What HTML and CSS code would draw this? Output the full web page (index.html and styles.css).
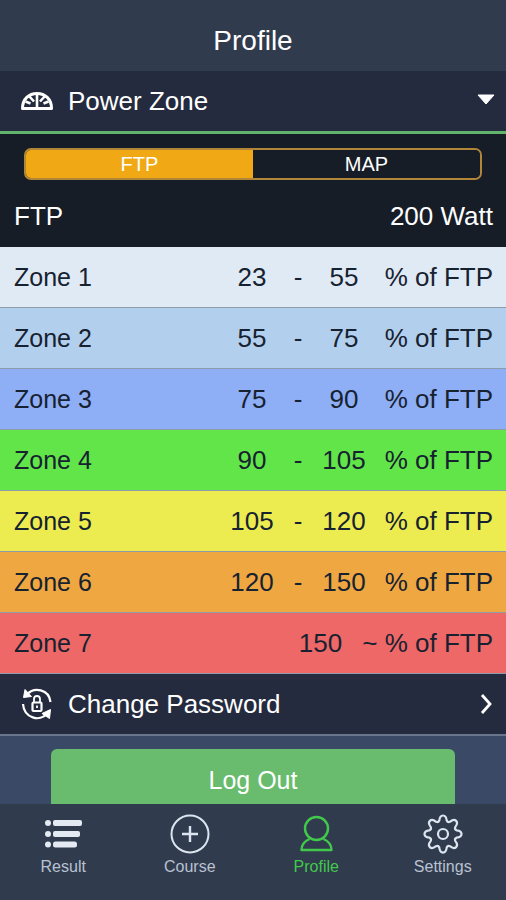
FILE: index.html
```html
<!DOCTYPE html>
<html lang="en">
<head>
<meta charset="utf-8">
<meta name="viewport" content="width=device-width, initial-scale=1">
<title>Profile</title>
<link rel="stylesheet" href="styles.css">
</head>
<body>
<header class="header"><h1>Profile</h1></header>

<main class="content">
  <button type="button" class="row row-open" aria-expanded="true" aria-controls="power-zone">
    <svg class="row-icon" viewBox="0 0 34 34" aria-hidden="true">
      <path d="M2.500 24.500C2.500 15 9 9.500 17 9.500S31.500 15 31.500 24.500Z" fill="none" stroke="#fff" stroke-width="3" stroke-linejoin="round"/>
      <path d="M17 10v14M9 12l5 5.500M25 12l-5 5.500M5.500 17.500l5 2M28.500 17.500l-5 2" fill="none" stroke="#fff" stroke-width="2.600"/>
    </svg>
    <span class="row-label">Power Zone</span>
    <svg class="caret" viewBox="0 0 18 11" aria-hidden="true"><path d="M1 1h16L9 10z" fill="#fff" stroke="#fff" stroke-linejoin="round"/></svg>
  </button>

  <section id="power-zone">
    <div class="panel">
      <div class="segments">
        <button type="button" class="segment segment-active" aria-pressed="true">FTP</button>
        <button type="button" class="segment" aria-pressed="false">MAP</button>
      </div>
      <div class="power"><span>FTP</span><span>200 Watt</span></div>
    </div>

    <table class="zones">
      <colgroup><col><col class="col-num"><col class="col-dash"><col class="col-num"><col class="col-unit"></colgroup>
      <tbody>
        <tr class="zone-1"><th scope="row">Zone 1</th><td>23</td><td>-</td><td>55</td><td class="unit">% of FTP</td></tr>
        <tr class="zone-2"><th scope="row">Zone 2</th><td>55</td><td>-</td><td>75</td><td class="unit">% of FTP</td></tr>
        <tr class="zone-3"><th scope="row">Zone 3</th><td>75</td><td>-</td><td>90</td><td class="unit">% of FTP</td></tr>
        <tr class="zone-4"><th scope="row">Zone 4</th><td>90</td><td>-</td><td>105</td><td class="unit">% of FTP</td></tr>
        <tr class="zone-5"><th scope="row">Zone 5</th><td>105</td><td>-</td><td>120</td><td class="unit">% of FTP</td></tr>
        <tr class="zone-6"><th scope="row">Zone 6</th><td>120</td><td>-</td><td>150</td><td class="unit">% of FTP</td></tr>
        <tr class="zone-7"><th scope="row">Zone 7</th><td class="unit" colspan="4"><span class="minimum">150</span>~ % of FTP</td></tr>
      </tbody>
    </table>
  </section>

  <button type="button" class="row row-password">
    <svg class="row-icon" viewBox="0 0 34 34" fill="none" stroke="#fff" aria-hidden="true">
      <path d="M7 7.500C14 -0.500 29 2 30.500 15M3 17C4 31 20 35.500 27 26.500" stroke-width="2.200"/>
      <path d="M5 2.500L3.500 10.500L11.500 9.500zM29.500 31.500L30.500 22.500L22 26.500z" fill="#fff" stroke-linejoin="round"/>
      <rect x="12.500" y="15.500" width="9" height="8.500" rx="1" stroke-width="2.200"/>
      <path d="M14 15.500v-3.500a3 3 0 0 1 6 0v3.500M17 18.500v2.500" stroke-width="1.800"/>
    </svg>
    <span class="row-label">Change Password</span>
    <svg class="chevron" viewBox="0 0 12 20" aria-hidden="true"><path d="M2 1l8 9-8 9" fill="none" stroke="#fff" stroke-width="2.800"/></svg>
  </button>

  <div class="actions"><button type="button" class="logout">Log Out</button></div>
</main>

<nav class="tabs">
  <a class="tab" href="#result">
    <svg viewBox="0 0 40 40" fill="#e3eaf2" aria-hidden="true">
      <circle cx="5" cy="9" r="3"/><circle cx="5" cy="20" r="3"/><circle cx="5" cy="30.500" r="3"/>
      <rect x="10" y="6" width="29" height="6" rx="2"/><rect x="10" y="17" width="27" height="6" rx="2"/><rect x="10" y="27.500" width="24" height="6" rx="2.500"/>
    </svg>
    Result
  </a>
  <a class="tab" href="#course">
    <svg viewBox="0 0 40 40" fill="none" stroke="#dce5ef" stroke-width="2" aria-hidden="true"><circle cx="20" cy="20" r="18.500"/><path d="M20 12v16M12 20h16" stroke-width="2.400"/></svg>
    Course
  </a>
  <a class="tab tab-active" href="#profile" aria-current="page">
    <svg viewBox="0 0 40 40" fill="none" stroke="#42c94b" stroke-width="2.400" stroke-linejoin="round" aria-hidden="true"><circle cx="20.500" cy="14.500" r="11.500"/><path d="M13.500 25C9 27 5.500 30 5.500 36H35.500C35.500 30 32 27 27.500 25"/></svg>
    Profile
  </a>
  <a class="tab" href="#settings">
    <svg viewBox="0 0 40 40" fill="none" stroke="#dce5ef" stroke-width="2.200" stroke-linejoin="round" aria-hidden="true">
      <circle cx="20" cy="20" r="5"/>
      <path d="M16.300 6.500C17 -0.200 23 -0.200 23.700 6.500Q24.700 8.600 26.900 7.800C32.200 3.600 36.400 7.800 32.200 13.100Q31.400 15.300 33.500 16.300C40.200 17 40.200 23 33.500 23.700Q31.400 24.700 32.200 26.900C36.400 32.200 32.200 36.400 26.900 32.200Q24.700 31.400 23.700 33.500C23 40.200 17 40.200 16.300 33.500Q15.300 31.400 13.100 32.200C7.800 36.400 3.600 32.200 7.800 26.900Q8.600 24.700 6.500 23.700C-0.200 23 -0.200 17 6.500 16.300Q8.600 15.300 7.800 13.100C3.600 7.800 7.800 3.600 13.100 7.800Q15.300 8.600 16.300 6.500Z"/>
    </svg>
    Settings
  </a>
</nav>
</body>
</html>
```
FILE: styles.css
```css
* { box-sizing: border-box; }

body {
  margin: 0;
  height: 100vh;
  display: flex;
  flex-direction: column;
  background: #3a4965;
  color: #fff;
  font-family: "Liberation Sans", Arial, sans-serif;
  font-size: 26px;
  line-height: 30px;
}

button {
  margin: 0;
  border: 0;
  color: inherit;
  font: inherit;
  cursor: pointer;
}

.header {
  padding: 25px 16px 14px;
  background: #303b4e;
  text-align: center;
}

.header h1 {
  margin: 0;
  font-size: 28px;
  font-weight: 400;
  line-height: 32px;
}

.content {
  flex: 1;
  min-height: 0;
  overflow-y: auto;
  scrollbar-width: none;
}

.row {
  display: flex;
  align-items: center;
  width: 100%;
  padding: 15px 12px 15px 20px;
  background: #252b3e;
  text-align: left;
}

.row-open { border-bottom: 3px solid #62b46d; }
.row-password { border-bottom: 2px solid #68758c; }

.row-icon {
  width: 34px;
  height: 34px;
  margin: -2px 14px -2px 0;
}

.row-label { flex: 1; }

.caret {
  width: 18px;
  height: 11px;
  margin: 0 -1px 4px 0;
}

.chevron {
  width: 12px;
  height: 20px;
  margin-right: 2px;
}

.panel {
  padding: 14px 0 16px;
  background: #171d27;
}

.segments {
  display: flex;
  margin: 0 24px;
  border: 2px solid #b28638;
  border-radius: 7px;
  overflow: hidden;
}

.segment {
  flex: 1;
  padding: 2px;
  background: #171d27;
  font-size: 20px;
  line-height: 24px;
}

.segment-active { background: #f0a915; }

.power {
  display: flex;
  justify-content: space-between;
  padding: 21px 13px 0 14px;
}

.zones {
  width: 100%;
  border-spacing: 0;
  table-layout: fixed;
  color: #172230;
}

.col-num { width: 70px; }
.col-dash { width: 22px; }
.col-unit { width: 127px; }

.zones th,
.zones td {
  height: 61px;
  padding: 0;
  border-bottom: 1px solid #8e9bab;
  font-weight: 400;
  text-align: center;
}

.zones th {
  padding-left: 14px;
  font-size: 25px;
  text-align: left;
}

.zones .unit {
  padding-right: 13px;
  text-align: right;
}

.minimum { margin-right: 20px; }

.zone-1 { background: #dfeaf5; }
.zone-2 { background: #b3cfee; }
.zone-3 { background: #8eaef6; }
.zone-4 { background: #62e549; }
.zone-5 { background: #ecec50; }
.zone-6 { background: #efa742; }
.zone-7 { background: #ef6868; }

.actions { padding: 13px 10% 20px; }

.logout {
  width: 100%;
  padding: 16px;
  border-radius: 6px;
  background: #69bb6d;
  font-size: 25px;
}

.tabs {
  display: grid;
  grid-template-columns: repeat(4, 1fr);
  padding: 10px 0 22px;
  background: #303b4e;
}

.tab {
  display: flex;
  flex-direction: column;
  align-items: center;
  gap: 3px;
  padding-bottom: 1px;
  color: #b9c2d1;
  font-size: 16px;
  line-height: 20px;
  text-decoration: none;
}

.tab svg {
  width: 40px;
  height: 40px;
}

.tab-active { color: #42c94b; }
```
